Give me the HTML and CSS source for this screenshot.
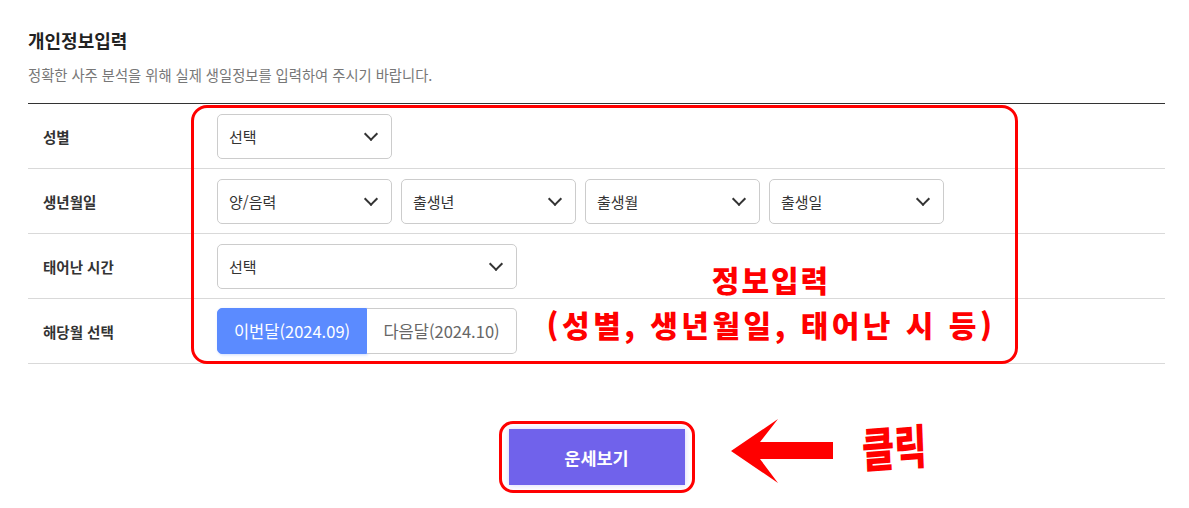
FILE: index.html
```html
<!DOCTYPE html>
<html lang="ko">
<head>
    <meta charset="UTF-8">
    <meta name="viewport" content="width=device-width, initial-scale=1.0">
    <title>개인정보입력</title>
    <link rel="stylesheet" href="styles.css">
</head>
<body>

    <div class="page">
        <!-- 섹션 제목 -->
        <h2 class="title">개인정보입력</h2>
        <p class="desc">정확한 사주 분석을 위해 실제 생일정보를 입력하여 주시기 바랍니다.</p>

        <!-- 입력 폼 -->
        <div class="form">
            <div class="row">
                <div class="label">성별</div>
                <div class="fields">
                    <div class="select">선택<span class="chev"></span></div>
                </div>
            </div>
            <div class="row">
                <div class="label">생년월일</div>
                <div class="fields">
                    <div class="select">양/음력<span class="chev"></span></div>
                    <div class="select">출생년<span class="chev"></span></div>
                    <div class="select">출생월<span class="chev"></span></div>
                    <div class="select">출생일<span class="chev"></span></div>
                </div>
            </div>
            <div class="row">
                <div class="label">태어난 시간</div>
                <div class="fields">
                    <div class="select wide">선택<span class="chev"></span></div>
                </div>
            </div>
            <div class="row">
                <div class="label">해당월 선택</div>
                <div class="fields">
                    <div class="toggle">
                        <button class="tab active">이번달(2024.09)</button>
                        <button class="tab">다음달(2024.10)</button>
                    </div>
                </div>
            </div>

            <!-- 주석 표시 -->
            <div class="mark-box"></div>
            <div class="mark-text">
                <div>정보입력</div>
                <div class="wide-note">(성별, 생년월일, 태어난 시 등)</div>
            </div>
        </div>

        <!-- 버튼 -->
        <div class="actions">
            <div class="btn-ring">
                <button class="btn-submit">운세보기</button>
                <svg class="arrow" width="104" height="64" viewBox="0 0 104 64">
                    <polygon points="0,32 47,0 29,23 102,23 102,40 29,40 47,64" fill="#ff0000"/>
                </svg>
                <span class="click">클릭</span>
            </div>
        </div>
    </div>

</body>
</html>
```

FILE: styles.css
```css
/* 기본 */
body {
    margin: 0;
    background: #fff;
    font-family: "Noto Sans CJK KR", "Noto Sans", sans-serif;
    color: #333;
}

.page {
    width: 1137px;
    padding: 27px 0 0 28px;
}

/* 제목 */
.title {
    margin: 0;
    font-size: 18px;
    line-height: 26px;
    font-weight: 700;
    color: #222;
}

.desc {
    margin: 12px 0 0;
    font-size: 14.3px;
    line-height: 20px;
    color: #777;
}

/* 폼 테이블 */
.form {
    position: relative;
    margin-top: 18px;
    border-top: 1px solid #333;
}

.row {
    display: flex;
    align-items: center;
    height: 64px;
    border-bottom: 1px solid #d9d9d9;
}

.row:last-of-type {
    border-bottom-color: #bbb;
}

.label {
    width: 174px;
    padding-left: 15px;
    font-size: 14.5px;
    font-weight: 700;
    color: #333;
}

.fields {
    display: flex;
    gap: 9px;
}

.select {
    box-sizing: border-box;
    display: flex;
    align-items: center;
    justify-content: space-between;
    width: 175px;
    height: 45px;
    padding: 0 15px 0 11px;
    border: 1px solid #ccc;
    border-radius: 5px;
    font-size: 15px;
    color: #333;
}

.select.wide {
    width: 300px;
}

.chev {
    width: 8px;
    height: 8px;
    margin-top: -5px;
    border-right: 2px solid #333;
    border-bottom: 2px solid #333;
    transform: rotate(45deg);
}

/* 해당월 토글 */
.toggle {
    display: flex;
}

.tab {
    box-sizing: border-box;
    width: 150px;
    height: 46px;
    padding: 0;
    border: 1px solid #ccc;
    background: #fff;
    font-family: inherit;
    font-size: 16.5px;
    color: #666;
    cursor: pointer;
}

.tab:first-child {
    border-radius: 5px 0 0 5px;
}

.tab:last-child {
    border-left: none;
    border-radius: 0 5px 5px 0;
}

.tab.active {
    border-color: #5b8bff;
    background: #5b8bff;
    color: #fff;
    box-shadow: 1px 1px 3px rgba(91, 139, 255, 0.3);
}

/* 빨간 주석 */
.mark-box {
    position: absolute;
    left: 163px;
    top: 1px;
    width: 821px;
    height: 253px;
    border: 3px solid #ff0000;
    border-radius: 16px;
}

.mark-text {
    position: absolute;
    left: 500px;
    top: 153px;
    width: 486px;
    text-align: center;
    font-size: 30px;
    font-weight: 900;
    line-height: 45px;
    letter-spacing: 2px;
    color: #ff0000;
    white-space: nowrap;
}

.mark-text .wide-note {
    letter-spacing: 3.5px;
}

/* 운세보기 버튼 */
.actions {
    display: flex;
    justify-content: center;
    margin-top: 57px;
}

.btn-ring {
    position: relative;
    padding: 5px 7px;
    border: 3px solid #ff0000;
    border-radius: 14px;
}

.btn-submit {
    display: block;
    width: 176px;
    height: 56px;
    border: none;
    background: #7062eb;
    color: #fff;
    font-family: inherit;
    font-size: 17.5px;
    font-weight: 700;
    box-shadow: 0 0 6px rgba(112, 98, 235, 0.3);
    cursor: pointer;
}

.arrow {
    position: absolute;
    left: 229px;
    top: -5px;
}

.click {
    position: absolute;
    left: 360px;
    top: -2px;
    font-size: 38px;
    font-weight: 900;
    line-height: 52px;
    color: #ff0000;
    white-space: nowrap;
    transform: scale(0.92, 1.25) rotate(-3deg);
    transform-origin: left center;
}
```
